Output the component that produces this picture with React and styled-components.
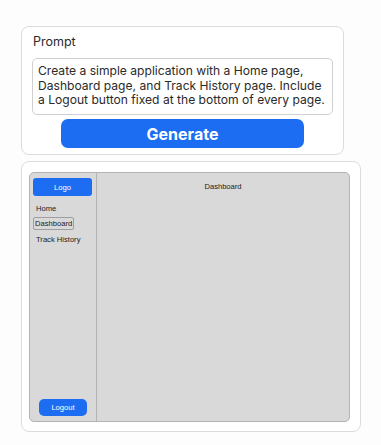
import React from 'react';
import styled, { createGlobalStyle } from 'styled-components';

const GlobalStyle = createGlobalStyle`
  body {
    margin: 0;
    background: #fdfdfd;
    font-family: Inter, "Noto Sans", sans-serif;
    color: #222;
  }
`;

const Page = styled.div`
  display: flex;
  flex-direction: column;
  align-items: flex-start;
  gap: 6px;
  padding: 26px 0 0 21px;
`;

const Card = styled.div`
  box-sizing: border-box;
  width: ${(p) => p.$width}px;
  background: #fff;
  border: 1px solid #dcdcdc;
  border-radius: 8px;
`;

const PromptCard = styled(Card)`
  display: flex;
  flex-direction: column;
  padding: 7px 10px 6px;
`;

const Label = styled.div`
  font-size: 12.5px;
  line-height: 16px;
  color: #2a2a2a;
  margin-left: 1px;
  margin-bottom: 8px;
`;

const PromptBox = styled.div`
  box-sizing: border-box;
  height: 57px;
  border: 1px solid #d0d0d0;
  border-radius: 5px;
  padding: 5px 5px;
  font-size: 12.1px;
  line-height: 14.6px;
  color: #2a2a2a;
`;

const GenerateButton = styled.button`
  align-self: center;
  width: 243px;
  height: 29px;
  margin-top: 4px;
  border: none;
  border-radius: 7px;
  background: #1c6df2;
  color: #fff;
  font-family: Inter, "Noto Sans", sans-serif;
  font-size: 16px;
  font-weight: 700;
`;

const PreviewCard = styled(Card)`
  padding: 10px 10px 9px 7px;
`;

const Preview = styled.div`
  box-sizing: border-box;
  width: 321px;
  height: 250px;
  display: flex;
  background: #d9d9d9;
  border: 1px solid #b3b3b3;
  border-radius: 5px;
  overflow: hidden;
  font-family: "Liberation Sans", Arial, sans-serif;
  font-size: 7.6px;
  color: #222;
`;

const Sidebar = styled.div`
  width: 67px;
  flex-shrink: 0;
  display: flex;
  flex-direction: column;
  align-items: flex-start;
  padding: 5px 4px 5px 3px;
  box-sizing: border-box;
  border-right: 1px solid #b3b3b3;
`;

const BlueButton = styled.div`
  display: flex;
  align-items: center;
  justify-content: center;
  background: #1c6df2;
  color: #fff;
  border-radius: ${(p) => p.$radius}px;
  width: ${(p) => p.$w}px;
  height: ${(p) => p.$h}px;
`;

const LogoutButton = styled(BlueButton)`
  margin-left: 6px;
`;

const NavItem = styled.div`
  padding: 1px 1px;
  margin-left: ${(p) => (p.$active ? 0 : 1)}px;
  line-height: 9px;
  border: 1px solid ${(p) => (p.$active ? '#9f9f9f' : 'transparent')};
  border-radius: 2px;
  margin-top: ${(p) => p.$mt}px;
`;

const Spacer = styled.div`
  flex: 1;
`;

const Main = styled.div`
  flex: 1;
  display: flex;
  justify-content: center;
  padding-top: 9px;
`;

export default function App() {
  return (
    <>
      <GlobalStyle />
      <Page>
        <PromptCard $width={323}>
          <Label>Prompt</Label>
          <PromptBox>
            Create a simple application with a Home page, Dashboard page, and Track History page. Include a Logout button fixed at the bottom of every page.
          </PromptBox>
          <GenerateButton>Generate</GenerateButton>
        </PromptCard>
        <PreviewCard $width={340}>
          <Preview>
            <Sidebar>
              <BlueButton $w={59} $h={18} $radius={3}>Logo</BlueButton>
              <NavItem $mt={6}>Home</NavItem>
              <NavItem $mt={2} $active>Dashboard</NavItem>
              <NavItem $mt={3}>Track History</NavItem>
              <Spacer />
              <LogoutButton $w={48} $h={17} $radius={5}>Logout</LogoutButton>
            </Sidebar>
            <Main>Dashboard</Main>
          </Preview>
        </PreviewCard>
      </Page>
    </>
  );
}
